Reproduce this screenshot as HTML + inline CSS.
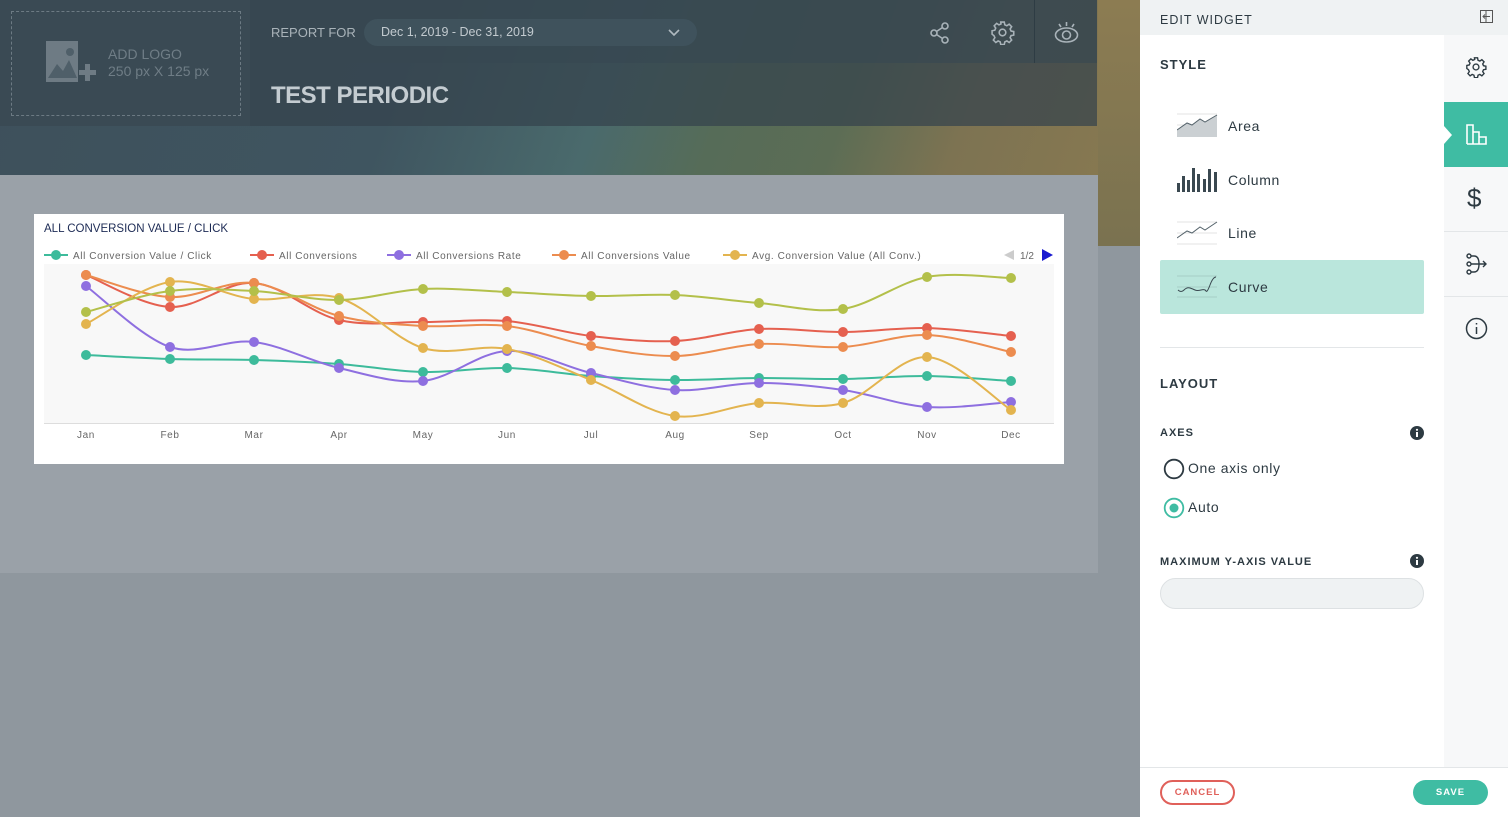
<!DOCTYPE html>
<html><head><meta charset="utf-8"><style>
*{box-sizing:border-box;margin:0;padding:0}
body{width:1508px;height:817px;overflow:hidden;font-family:"Liberation Sans",sans-serif;background:#8f979e;position:relative}
.abs{position:absolute}
#bg{left:0;top:0;width:1140px;height:246px;background:linear-gradient(110deg,#3e505b 0%,#3f5560 35%,#4a6a6c 52%,#566c58 62%,#5c6d55 72%,#7d7352 82%,#8a7a50 100%)}
#hdr{left:0;top:0;width:1097px;height:126px;background:rgba(52,66,76,.72)}
#hdrtop{left:0;top:0;width:1097px;height:63px;background:rgba(55,72,82,.6)}
#logo{left:0;top:0;width:250px;height:126px;background:#3a4a54}
#logobox{left:11px;top:11px;width:230px;height:105px;border:1px dashed #6c7a83}
#gray1{left:0;top:175px;width:1098px;height:398px;background:#9aa1a8}
#card{left:34px;top:214px;width:1030px;height:250px;background:#fff}
#panel{left:1140px;top:0;width:368px;height:817px;background:#fff}
.lbl{font-size:13px;color:#2d3a42;letter-spacing:.5px}
</style></head><body>
<div class="abs" id="bg"></div>
<div class="abs" id="hdr"></div>
<div class="abs" id="hdrtop"></div>
<div class="abs" style="left:1034px;top:0;width:1px;height:63px;background:#2e3c44"></div>
<div class="abs" id="logo"></div>
<div class="abs" id="logobox"></div>
<svg class="abs" style="left:45px;top:40px" width="56" height="45" viewBox="0 0 56 45"><rect x="1" y="1" width="32" height="41" fill="#6e7b84"/><polygon points="3,38 12,24 18,31 24,20 32,38" fill="#4f5f69"/><circle cx="25" cy="12" r="4" fill="#4f5f69"/><rect x="34" y="30" width="17" height="5" fill="#6e7b84"/><rect x="40" y="24" width="5" height="17" fill="#6e7b84"/></svg>
<div class="abs" style="left:108px;top:46px;color:#6f7d86;font-size:14px;line-height:17px">ADD LOGO<br>250 px X 125 px</div>
<div class="abs" style="left:271px;top:25px;color:#a9b3b9;font-size:13px">REPORT FOR</div>
<div class="abs" style="left:364px;top:19px;width:333px;height:27px;border-radius:14px;background:#3f525c"></div>
<div class="abs" style="left:381px;top:25px;color:#c2cacf;font-size:12.5px">Dec 1, 2019 - Dec 31, 2019</div>
<svg class="abs" style="left:668px;top:29px" width="12" height="8"><path d="M1 1l5 5 5-5" stroke="#b0bac0" stroke-width="1.6" fill="none"/></svg>
<svg class="abs" style="left:928px;top:21px" width="24" height="24" fill="none" stroke="#a9b3b9" stroke-width="1.6"><circle cx="17" cy="5" r="3"/><circle cx="6" cy="12" r="3"/><circle cx="17" cy="19" r="3"/><path d="M8.5 10.5l6-4M8.5 13.5l6 4"/></svg>
<svg class="abs" style="left:990px;top:20px" width="25" height="25" viewBox="0 0 24 24" fill="none" stroke="#a9b3b9" stroke-width="1.5"><circle cx="12" cy="12" r="3.2"/><path d="M10.3 2h3.4l.5 2.6 2 .9 2.2-1.5 2.4 2.4-1.5 2.2.9 2 2.6.5v3.4l-2.6.5-.9 2 1.5 2.2-2.4 2.4-2.2-1.5-2 .9-.5 2.6h-3.4l-.5-2.6-2-.9-2.2 1.5-2.4-2.4 1.5-2.2-.9-2L2 13.7v-3.4l2.6-.5.9-2L4 5.6 6.4 3.2l2.2 1.5 2-.9z"/></svg>
<svg class="abs" style="left:1053px;top:20px" width="27" height="25" fill="none" stroke="#a9b3b9" stroke-width="1.6"><ellipse cx="13.5" cy="15" rx="11" ry="7"/><circle cx="13.5" cy="15" r="4"/><path d="M13.5 2v4M6 4l2 3M21 4l-2 3"/></svg>
<div class="abs" style="left:271px;top:82px;color:#c4ccd1;font-size:24px;font-weight:bold;letter-spacing:-.5px">TEST PERIODIC</div>
<div class="abs" id="gray1"></div>
<div class="abs" id="card"></div>
<div class="abs" style="left:44px;top:223px;font-size:11.5px;color:#1d2b55">ALL CONVERSION VALUE / CLICK</div>
<svg class="abs" style="left:0;top:0" width="1098" height="470" id="ch">
<rect x="44" y="264" width="1010" height="159" fill="#f8f8f8"/>
<line x1="44" y1="423.5" x2="1054" y2="423.5" stroke="#ddd"/>
<g font-size="10" fill="#666" text-anchor="middle" font-family="Liberation Sans" letter-spacing=".6">
<text x="86" y="438">Jan</text><text x="170" y="438">Feb</text><text x="254" y="438">Mar</text><text x="339" y="438">Apr</text><text x="423" y="438">May</text><text x="507" y="438">Jun</text><text x="591" y="438">Jul</text><text x="675" y="438">Aug</text><text x="759" y="438">Sep</text><text x="843" y="438">Oct</text><text x="927" y="438">Nov</text><text x="1011" y="438">Dec</text></g>
<g font-size="10" fill="#666" font-family="Liberation Sans" letter-spacing=".6" id="leg"></g>
<polygon points="1004,255 1014,250 1014,260" fill="#ccc"/><text x="1020" y="259" font-size="10" fill="#666" font-family="Liberation Sans">1/2</text><polygon points="1042,249 1053,255 1042,261" fill="#1a1ad0"/>
</svg>
<div class="abs" style="left:1098px;top:0;width:42px;height:246px;background:linear-gradient(180deg,#8c7c52,#7a7250)"></div>
<div class="abs" id="panel"></div>
<div class="abs" style="left:1140px;top:0;width:368px;height:35px;background:#eff2f3"></div>
<div class="abs" style="left:1160px;top:11px" ><span class="lbl" style="font-size:12.5px;letter-spacing:1px">EDIT WIDGET</span></div>
<svg class="abs" style="left:1480px;top:10px" width="13" height="13" fill="none" stroke="#555"><rect x=".5" y=".5" width="12" height="12"/><path d="M6 .5v12M3 6.5h7M5 4.5l-2 2 2 2"/></svg>
<div class="abs" style="left:1444px;top:35px;width:64px;height:732px;background:#f7f8f9"></div>
<div class="abs" style="left:1444px;top:102px;width:64px;height:65px;background:#3fbca3"></div>
<svg class="abs" style="left:1442px;top:126px" width="10" height="18"><polygon points="2,0 10,9 2,18" fill="#fff"/></svg>
<svg class="abs" style="left:1465px;top:56px" width="22" height="22" viewBox="0 0 24 24" fill="none" stroke="#2d3a42" stroke-width="1.5"><circle cx="12" cy="12" r="3.2"/><path d="M10.3 2h3.4l.5 2.6 2 .9 2.2-1.5 2.4 2.4-1.5 2.2.9 2 2.6.5v3.4l-2.6.5-.9 2 1.5 2.2-2.4 2.4-2.2-1.5-2 .9-.5 2.6h-3.4l-.5-2.6-2-.9-2.2 1.5-2.4-2.4 1.5-2.2-.9-2L2 13.7v-3.4l2.6-.5.9-2L4 5.6 6.4 3.2l2.2 1.5 2-.9z"/></svg>
<svg class="abs" style="left:1466px;top:123px" width="22" height="22" fill="none" stroke="#fff" stroke-width="1.6"><path d="M1 21V2h6v19M7 21V9h6v12M13 21v-7h7v7zM1 21h19"/></svg>
<div class="abs" style="left:1444px;top:231px;width:64px;height:1px;background:#e3e6e8"></div>
<div class="abs" style="left:1444px;top:296px;width:64px;height:1px;background:#e3e6e8"></div>
<div class="abs" style="left:1467px;top:183px;font-size:26px;color:#2d3a42">$</div>
<svg class="abs" style="left:1466px;top:253px" width="22" height="22" fill="none" stroke="#2d3a42" stroke-width="1.4"><circle cx="3" cy="3" r="2"/><circle cx="3" cy="11" r="2"/><circle cx="3" cy="19" r="2"/><path d="M5 3h3q5 0 5 8q0 8-5 8H5M5 11h15M17 8l3 3-3 3"/></svg>
<svg class="abs" style="left:1465px;top:317px" width="23" height="23" fill="none" stroke="#2d3a42" stroke-width="1.5"><circle cx="11.5" cy="11.5" r="10"/><path d="M11.5 10v7M11.5 6v1.5"/></svg>
<div class="abs lbl" style="left:1160px;top:57px;font-weight:bold;font-size:13px;letter-spacing:1px">STYLE</div>
<svg class="abs" style="left:1177px;top:112px" width="42" height="25"><line x1="0" y1="2" x2="40" y2="2" stroke="#e3e3e3"/><line x1="0" y1="13" x2="40" y2="13" stroke="#e3e3e3"/><polygon points="0,18 10,11 15,13 23,7 28,10 40,3 40,25 0,25" fill="#cbd0d3"/><polyline points="0,18 10,11 15,13 23,7 28,10 40,3" fill="none" stroke="#55636b"/></svg>
<div class="abs" style="left:1228px;top:118px;font-size:14px;color:#2d3a42;letter-spacing:.6px">Area</div>
<svg class="abs" style="left:1177px;top:166px" width="42" height="26" fill="#3a4850"><rect x="0" y="17" width="3" height="9"/><rect x="5" y="10" width="3" height="16"/><rect x="10" y="14" width="3" height="12"/><rect x="15" y="2" width="3" height="24"/><rect x="20" y="8" width="3" height="18"/><rect x="26" y="13" width="3" height="13"/><rect x="31" y="3" width="3" height="23"/><rect x="37" y="6" width="3" height="20"/></svg>
<div class="abs" style="left:1228px;top:172px;font-size:14px;color:#2d3a42;letter-spacing:.6px">Column</div>
<svg class="abs" style="left:1177px;top:220px" width="42" height="25"><line x1="0" y1="2" x2="40" y2="2" stroke="#e3e3e3"/><line x1="0" y1="13" x2="40" y2="13" stroke="#e3e3e3"/><line x1="0" y1="24" x2="40" y2="24" stroke="#e3e3e3"/><polyline points="0,18 10,11 15,13 23,7 28,10 40,2" fill="none" stroke="#55636b"/></svg>
<div class="abs" style="left:1228px;top:225px;font-size:14px;color:#2d3a42;letter-spacing:.6px">Line</div>
<div class="abs" style="left:1160px;top:260px;width:264px;height:54px;background:#bae6dc;border-radius:2px"></div>
<svg class="abs" style="left:1177px;top:274px" width="42" height="25"><line x1="0" y1="2" x2="40" y2="2" stroke="#a5cfc6"/><line x1="0" y1="13" x2="40" y2="13" stroke="#a5cfc6"/><line x1="0" y1="23" x2="40" y2="23" stroke="#a5cfc6"/><path d="M1 16q3 3 6 0t6-2 5 2 6 0 5 1 4-6 6-8" fill="none" stroke="#3a4850"/></svg>
<div class="abs" style="left:1228px;top:279px;font-size:14px;color:#2d3a42;letter-spacing:.6px">Curve</div>
<div class="abs" style="left:1160px;top:347px;width:264px;height:1px;background:#e3e6e8"></div>
<div class="abs lbl" style="left:1160px;top:376px;font-weight:bold;font-size:13px;letter-spacing:1px">LAYOUT</div>
<div class="abs lbl" style="left:1160px;top:427px;font-weight:bold;font-size:11px;letter-spacing:1px">AXES</div>
<svg class="abs" style="left:1410px;top:426px" width="14" height="14"><circle cx="7" cy="7" r="7" fill="#2d3a42"/><rect x="6" y="6" width="2" height="5" fill="#fff"/><circle cx="7" cy="3.8" r="1.1" fill="#fff"/></svg>
<svg class="abs" style="left:1163px;top:458px" width="22" height="22"><circle cx="11" cy="11" r="9.3" fill="none" stroke="#2d3a42" stroke-width="1.8"/></svg>
<div class="abs" style="left:1188px;top:460px;font-size:14px;color:#2d3a42;letter-spacing:.6px">One axis only</div>
<svg class="abs" style="left:1163px;top:497px" width="22" height="22"><circle cx="11" cy="11" r="9.3" fill="none" stroke="#3fbca3" stroke-width="1.8"/><circle cx="11" cy="11" r="4.5" fill="#3fbca3"/></svg>
<div class="abs" style="left:1188px;top:499px;font-size:14px;color:#2d3a42;letter-spacing:.6px">Auto</div>
<div class="abs lbl" style="left:1160px;top:556px;font-weight:bold;font-size:11px;letter-spacing:1px">MAXIMUM Y-AXIS VALUE</div>
<svg class="abs" style="left:1410px;top:554px" width="14" height="14"><circle cx="7" cy="7" r="7" fill="#2d3a42"/><rect x="6" y="6" width="2" height="5" fill="#fff"/><circle cx="7" cy="3.8" r="1.1" fill="#fff"/></svg>
<div class="abs" style="left:1160px;top:578px;width:264px;height:31px;border-radius:16px;background:#eff2f3;border:1px solid #dde1e3"></div>
<div class="abs" style="left:1140px;top:767px;width:368px;height:1px;background:#e3e6e8"></div>
<div class="abs" style="left:1160px;top:780px;width:75px;height:25px;border:2px solid #e0605a;border-radius:13px;color:#e0605a;font-size:9.5px;font-weight:bold;letter-spacing:1px;text-align:center;line-height:21px">CANCEL</div>
<div class="abs" style="left:1413px;top:780px;width:75px;height:25px;background:#3fbca3;border-radius:13px;color:#fff;font-size:9.5px;font-weight:bold;letter-spacing:1px;text-align:center;line-height:25px">SAVE</div>
<script>
var xs=[86,170,254,339,423,507,591,675,759,843,927,1011];
var S=[
["#3dbb9b",[355,359,360,364,372,368,376,380,378,379,376,381],"All Conversion Value / Click",44],
["#e5604f",[275,307,283,320,322,321,336,341,329,332,328,336],"All Conversions",250],
["#8e6fe0",[286,347,342,368,381,351,373,390,383,390,407,402],"All Conversions Rate",387],
["#ec8c4f",[275,297,283,316,326,326,346,356,344,347,335,352],"All Conversions Value",552],
["#e3b44f",[324,282,299,298,348,349,380,416,403,403,357,410],"Avg. Conversion Value (All Conv.)",723],
["#b3c04a",[312,291,291,300,289,292,296,295,303,309,277,278],"",0]];
var ns="http://www.w3.org/2000/svg",svg=document.getElementById("ch"),leg=document.getElementById("leg");
function el(t,a,p){var e=document.createElementNS(ns,t);for(var k in a)e.setAttribute(k,a[k]);(p||svg).appendChild(e);return e;}
S.forEach(function(s){var y=s[1],d="M"+xs[0]+" "+y[0];
for(var i=0;i<11;i++){var p0=[xs[Math.max(i-1,0)],y[Math.max(i-1,0)]],p1=[xs[i],y[i]],p2=[xs[i+1],y[i+1]],p3=[xs[Math.min(i+2,11)],y[Math.min(i+2,11)]];
d+=" C"+(p1[0]+(p2[0]-p0[0])/6)+" "+(p1[1]+(p2[1]-p0[1])/6)+" "+(p2[0]-(p3[0]-p1[0])/6)+" "+(p2[1]-(p3[1]-p1[1])/6)+" "+p2[0]+" "+p2[1];}
el("path",{d:d,fill:"none",stroke:s[0],"stroke-width":2});
y.forEach(function(v,i){el("circle",{cx:xs[i],cy:v,r:5,fill:s[0]});});
if(s[2]){el("line",{x1:s[3],y1:255,x2:s[3]+24,y2:255,stroke:s[0],"stroke-width":2});el("circle",{cx:s[3]+12,cy:255,r:5,fill:s[0]});var t=el("text",{x:s[3]+29,y:259},leg);t.textContent=s[2];}
});
</script>
</body></html>
